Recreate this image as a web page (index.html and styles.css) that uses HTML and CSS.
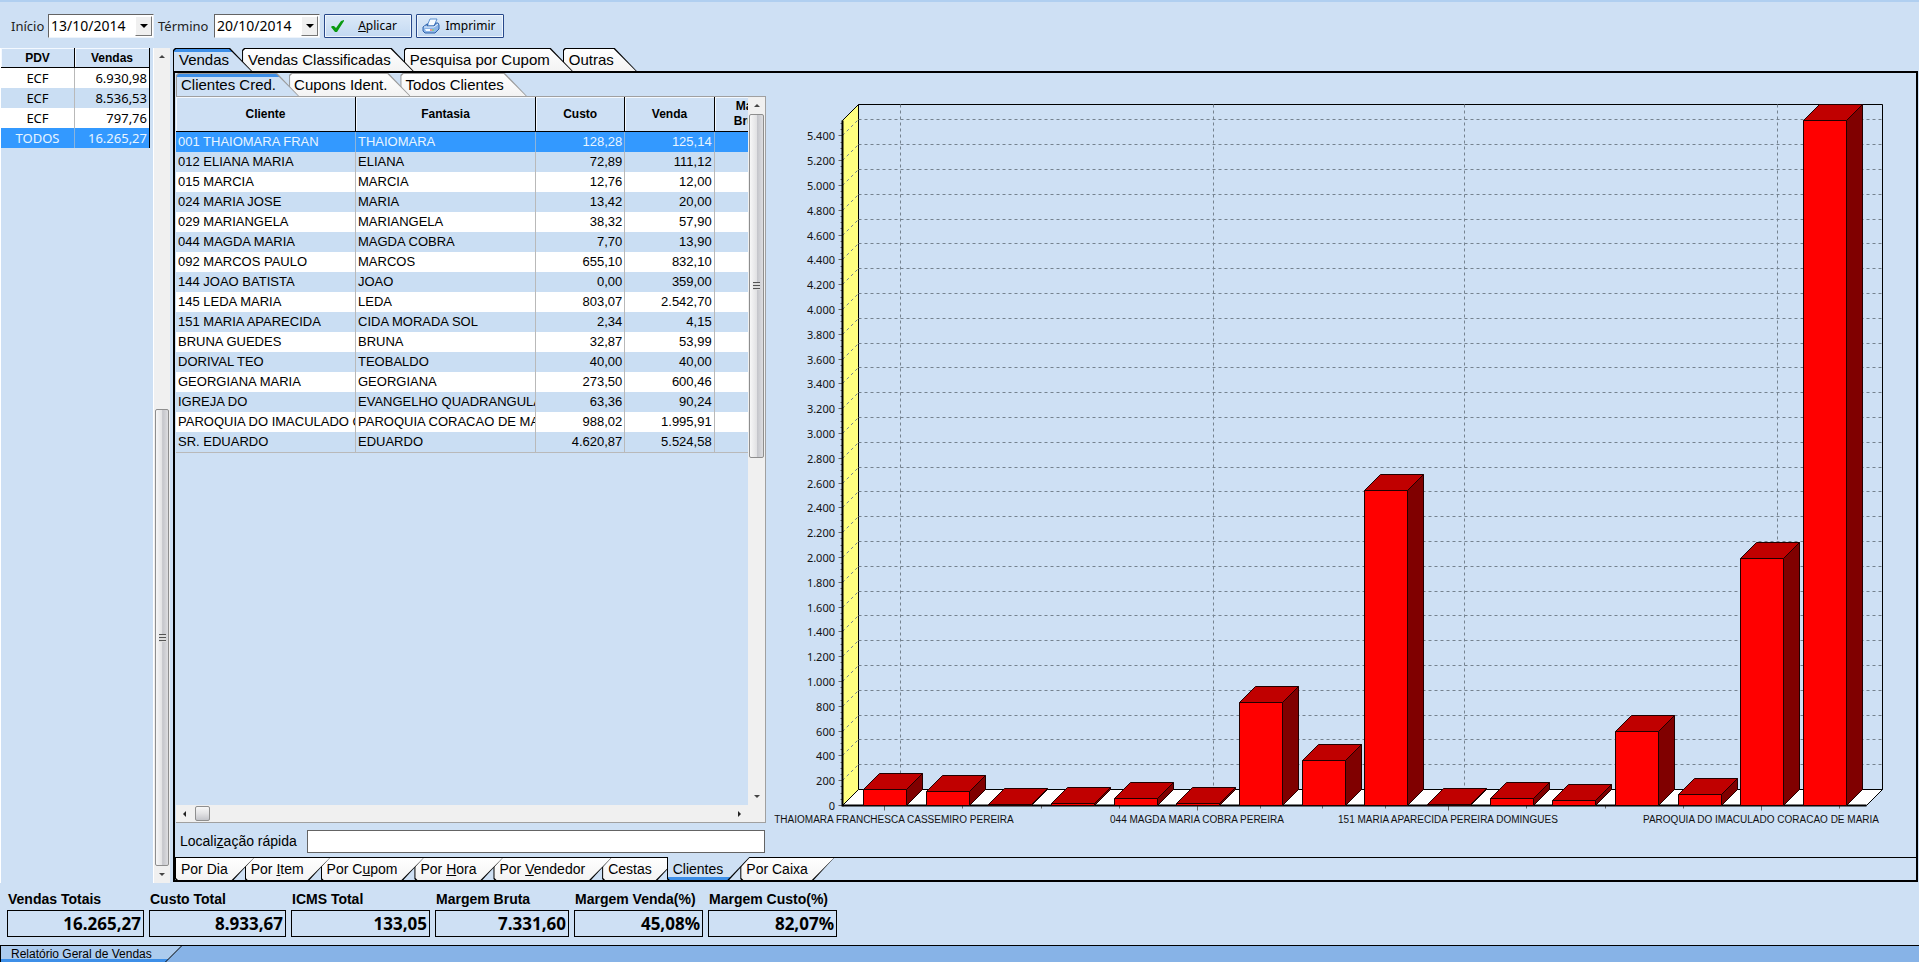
FILE: index.html
```
<!doctype html>
<html lang="pt-BR">
<head>
    <meta charset="UTF-8">
    <title>Relatório Geral de Vendas</title>
    <link rel="stylesheet" href="styles.css">
</head>
<body>

<form class="toolbar">
    <label for="inicio">Início</label>
    <div class="combo">
        <select id="inicio"><option>13/10/2014</option></select>
        <span class="combo-arrow"></span>
    </div>
    <label for="termino">Término</label>
    <div class="combo">
        <select id="termino"><option>20/10/2014</option></select>
        <span class="combo-arrow"></span>
    </div>
    <button type="button" class="btn">
        <svg width="16" height="16" viewBox="0 0 16 16"><path d="M1 9l1-1 2 0 2 2 5-7 3-1 0 1-7 11-2 0z" fill="#0a9a12"/></svg>
        <span><u>A</u>plicar</span>
    </button>
    <button type="button" class="btn">
        <svg width="18" height="16" viewBox="0 0 18 16">
            <path d="M5 8l3-7h7l-3 7z" fill="#f4faff" stroke="#5b8fd0"/>
            <path d="M1 9l4-3h1l-1 2h7l2-3h2l1 2v4l-4 4H3l-2-2z" fill="#8db6e8" stroke="#2f62ab"/>
            <path d="M2 9h10l4-3" fill="none" stroke="#e8f2fd"/>
            <path d="M3 11h9v2H4z" fill="#f7fbff"/>
            <path d="M8 12h2" stroke="#e03030"/>
            <path d="M10 12h2" stroke="#2b9b2b"/>
        </svg>
        <span>Imprimir</span>
    </button>
</form>

<div class="main">
    <div class="pdv">
        <table class="pdv-table">
            <thead>
                <tr><th>PDV</th><th>Vendas</th></tr>
            </thead>
            <tbody>
                <tr><td>ECF</td><td>6.930,98</td></tr>
                <tr><td>ECF</td><td>8.536,53</td></tr>
                <tr><td>ECF</td><td>797,76</td></tr>
                <tr class="selected"><td>TODOS</td><td>16.265,27</td></tr>
            </tbody>
        </table>
    </div>
    <div class="scroll scroll-v scroll-pdv">
        <i class="arrow up"></i>
        <div class="track"><span class="thumb"><i class="grip"></i></span></div>
        <i class="arrow down"></i>
    </div>

    <div class="report">
        <div class="tabs tabs-top">
            <button class="tab active">Vendas</button>
            <button class="tab">Vendas Classificadas</button>
            <button class="tab">Pesquisa por Cupom</button>
            <button class="tab">Outras</button>
        </div>
        <div class="panel">
            <div class="panel-body">
                <div class="list">
                    <div class="tabs tabs-inner">
                        <button class="tab active">Clientes Cred.</button>
                        <button class="tab">Cupons Ident.</button>
                        <button class="tab">Todos Clientes</button>
                    </div>
                    <div class="grid-box">
                        <div class="grid-view">
                            <table class="grid">
                                <colgroup>
                                    <col class="col-name"><col class="col-name">
                                    <col class="col-num"><col class="col-num"><col class="col-num">
                                </colgroup>
                                <thead>
                                    <tr><th>Cliente</th><th>Fantasia</th><th>Custo</th><th>Venda</th><th>Margem<br>Bruta(%)</th></tr>
                                </thead>
                                <tbody>
                                    <tr class="selected"><td>001 THAIOMARA FRAN</td><td>THAIOMARA</td><td>128,28</td><td>125,14</td><td></td></tr>
                                    <tr><td>012 ELIANA MARIA</td><td>ELIANA</td><td>72,89</td><td>111,12</td><td></td></tr>
                                    <tr><td>015 MARCIA</td><td>MARCIA</td><td>12,76</td><td>12,00</td><td></td></tr>
                                    <tr><td>024 MARIA JOSE</td><td>MARIA</td><td>13,42</td><td>20,00</td><td></td></tr>
                                    <tr><td>029 MARIANGELA</td><td>MARIANGELA</td><td>38,32</td><td>57,90</td><td></td></tr>
                                    <tr><td>044 MAGDA MARIA</td><td>MAGDA COBRA</td><td>7,70</td><td>13,90</td><td></td></tr>
                                    <tr><td>092 MARCOS PAULO</td><td>MARCOS</td><td>655,10</td><td>832,10</td><td></td></tr>
                                    <tr><td>144 JOAO BATISTA</td><td>JOAO</td><td>0,00</td><td>359,00</td><td></td></tr>
                                    <tr><td>145 LEDA MARIA</td><td>LEDA</td><td>803,07</td><td>2.542,70</td><td></td></tr>
                                    <tr><td>151 MARIA APARECIDA</td><td>CIDA MORADA SOL</td><td>2,34</td><td>4,15</td><td></td></tr>
                                    <tr><td>BRUNA GUEDES</td><td>BRUNA</td><td>32,87</td><td>53,99</td><td></td></tr>
                                    <tr><td>DORIVAL TEO</td><td>TEOBALDO</td><td>40,00</td><td>40,00</td><td></td></tr>
                                    <tr><td>GEORGIANA MARIA</td><td>GEORGIANA</td><td>273,50</td><td>600,46</td><td></td></tr>
                                    <tr><td>IGREJA DO</td><td>EVANGELHO QUADRANGULAR</td><td>63,36</td><td>90,24</td><td></td></tr>
                                    <tr><td>PAROQUIA DO IMACULADO CORACAO</td><td>PAROQUIA CORACAO DE MARIA</td><td>988,02</td><td>1.995,91</td><td></td></tr>
                                    <tr><td>SR. EDUARDO</td><td>EDUARDO</td><td>4.620,87</td><td>5.524,58</td><td></td></tr>
                                </tbody>
                            </table>
                        </div>
                        <div class="scroll scroll-v scroll-grid">
                            <i class="arrow up"></i>
                            <div class="track"><span class="thumb"><i class="grip"></i></span></div>
                            <i class="arrow down"></i>
                        </div>
                        <div class="scroll scroll-h">
                            <i class="arrow left"></i>
                            <div class="track"><span class="thumb"></span></div>
                            <i class="arrow right"></i>
                        </div>
                    </div>
                    <div class="search">
                        <label for="busca">Locali<u>z</u>ação rápida</label>
                        <input type="text" id="busca">
                    </div>
                </div>
                <div class="chart">
                    <svg id="chart" viewBox="767 73 1149 784"></svg>
                </div>
            </div>
            <div class="tabs tabs-bottom">
                <button class="tab">Por Dia</button>
                <button class="tab">Por <u>I</u>tem</button>
                <button class="tab">Por C<u>u</u>pom</button>
                <button class="tab">Por <u>H</u>ora</button>
                <button class="tab">Por <u>V</u>endedor</button>
                <button class="tab">Cestas</button>
                <button class="tab active">Clientes</button>
                <button class="tab">Por Caixa</button>
            </div>
        </div>
    </div>
</div>

<div class="totals">
    <div class="total"><label for="t1">Vendas Totais</label><input id="t1" value="16.265,27" readonly></div>
    <div class="total"><label for="t2">Custo Total</label><input id="t2" value="8.933,67" readonly></div>
    <div class="total"><label for="t3">ICMS Total</label><input id="t3" value="133,05" readonly></div>
    <div class="total"><label for="t4">Margem Bruta</label><input id="t4" value="7.331,60" readonly></div>
    <div class="total"><label for="t5">Margem Venda(%)</label><input id="t5" value="45,08%" readonly></div>
    <div class="total"><label for="t6">Margem Custo(%)</label><input id="t6" value="82,07%" readonly></div>
</div>

<div class="windows">
    <button class="window-tab">Relatório Geral de Vendas</button>
</div>

<script src="chart.js"></script>
</body>
</html>
```
FILE: styles.css
```
* {
    box-sizing: border-box;
    margin: 0;
    padding: 0;
}
body {
    display: flex;
    flex-direction: column;
    height: 100vh;
    overflow: hidden;
    border-top: 2px solid #b0cff0;
    background: #cee0f4;
    color: #000;
    font: 15px "Liberation Sans", Arial, sans-serif;
}
button, input, select {
    font: inherit;
    color: inherit;
}

/* barra superior */
.toolbar {
    display: flex;
    align-items: center;
    gap: 4px;
    height: 46px;
    padding: 1px 11px 0;
    font: 14px "Noto Sans", Tahoma, sans-serif;
}
.toolbar label {
    width: 33px;
    color: #222;
    font-size: 13px;
}
.toolbar label[for=termino] {
    width: 52px;
}
.combo {
    position: relative;
    width: 106px;
    height: 24px;
    border: 1px solid #646464;
    border-right-color: #eef4fb;
    border-bottom-color: #eef4fb;
}
.combo select {
    appearance: none;
    width: 100%;
    height: 100%;
    padding-left: 2px;
    border: 0;
    border-radius: 0;
    background: #fff;
}
.combo-arrow {
    position: absolute;
    top: 1px;
    right: 1px;
    width: 17px;
    height: 20px;
    border: 1px solid #fff;
    border-right-color: #777;
    border-bottom-color: #777;
    background: #f0f0f0;
    pointer-events: none;
}
.combo-arrow:after {
    content: '';
    position: absolute;
    left: 4px;
    top: 7px;
    border: 4px solid transparent;
    border-top-color: #000;
    border-bottom: 0;
}
.btn {
    display: flex;
    align-items: center;
    width: 88px;
    height: 24px;
    padding: 0 6px 0 5px;
    border: 1px solid #27488a;
    border-radius: 1px;
    background: linear-gradient(#dbe9f8, #c3d9f2);
    box-shadow: inset 0 0 0 1px #eef5fc;
    font-size: 12px;
}
.btn span {
    flex: 1;
    padding-left: 4px;
    text-align: center;
}

/* area principal */
.main {
    display: flex;
    flex: 1;
    min-height: 0;
}
.pdv {
    width: 153px;
    border-left: 1px solid #fff;
}
table {
    border-collapse: separate;
    border-spacing: 0;
    table-layout: fixed;
}
.pdv-table {
    width: 149px;
    border-right: 1px solid #000;
    font: 13px "Noto Sans", Tahoma, sans-serif;
}
th {
    border-right: 1px solid #000;
    border-bottom: 1px solid #000;
    background: #cee0f4;
    box-shadow: inset 1px 1px 0 #f4f9ff;
    font: bold 12px "Liberation Sans", Arial, sans-serif;
}
.pdv-table th {
    height: 20px;
}
.pdv-table th:last-child {
    border-right: 0;
}
td {
    height: 20px;
    overflow: hidden;
    border-right: 1px solid #b9b9b9;
    line-height: 20px;
    white-space: nowrap;
}
.pdv-table td {
    text-align: center;
}
.pdv-table td:last-child {
    padding-right: 2px;
    border-right: 0;
    text-align: right;
}
tbody tr:nth-child(odd) {
    background: #fff;
}
tbody tr:nth-child(even) {
    background: #cadef3;
}
tbody tr.selected {
    background: #3399ff;
    color: #e9f5ff;
}
.selected td {
    border-right-color: #8cb4dc;
}

/* barras de rolagem */
.scroll {
    display: flex;
    align-items: center;
    background: #f0f0f0;
}
.scroll-v {
    flex-direction: column;
    width: 17px;
}
.scroll-h {
    grid-column: 1;
    height: 17px;
}
.track {
    display: flex;
    flex: 1;
    align-self: stretch;
    min-height: 0;
}
.scroll-v .track {
    flex-direction: column;
}
.thumb {
    display: flex;
    align-items: center;
    justify-content: center;
    border: 1px solid #8e8e8e;
    border-radius: 2px;
    background: linear-gradient(90deg, #f7f7f7, #e2e2e4 50%, #c4c5ca 55%, #dddde0);
}
.scroll-v .thumb {
    margin: 0 1px;
}
.scroll-pdv {
    border-left: 1px solid #fff;
}
.scroll-pdv .track {
    justify-content: flex-end;
}
.scroll-pdv .thumb {
    height: 57%;
}
.scroll-grid .thumb {
    height: 51%;
}
.scroll-h .thumb {
    width: 15px;
    margin: 1px 0 1px 2px;
    background: linear-gradient(#f7f7f7, #e2e2e4 50%, #c4c5ca);
}
.grip {
    width: 7px;
    height: 8px;
    background: repeating-linear-gradient(#555 0 1px, #ddd 1px 3px);
}
.arrow {
    display: flex;
    align-items: center;
    justify-content: center;
    width: 17px;
    height: 17px;
}
.arrow:after {
    content: '';
    border: 3px solid transparent;
}
.up:after {
    border-bottom-color: #444;
    border-top: 0;
}
.down:after {
    border-top-color: #444;
    border-bottom: 0;
}
.left:after {
    border-right-color: #222;
    border-left: 0;
}
.right:after {
    border-left-color: #222;
    border-right: 0;
}

/* abas */
.report {
    display: flex;
    flex: 1;
    flex-direction: column;
    min-width: 0;
    margin: 0 1px 1px 3px;
}
.tabs {
    position: relative;
    z-index: 0;
    display: flex;
    --line: #000;
    --fill: linear-gradient(#fff, #f3f3f3);
}
.tabs-inner {
    --line: #9a9a9a;
}
.tab {
    position: relative;
    z-index: 1;
    height: 23px;
    margin-right: -10px;
    padding: 0 23px 0 6px;
    border: 0;
    background: var(--line);
    clip-path: polygon(0 2px, 2px 0, calc(100% - 22px) 0, 100% 100%, 0 100%);
    font-size: 15px;
    line-height: 24px;
    white-space: nowrap;
}
.tab:before {
    content: '';
    position: absolute;
    z-index: -1;
    top: 1px;
    right: 0;
    bottom: 0;
    left: 1px;
    background: var(--fill);
    clip-path: polygon(0 2px, 2px 0, calc(100% - 23px) 0, calc(100% - 1px) 100%, 0 100%);
}
.tabs-inner .tab {
    padding: 0 23px 0 5px;
}
.tab:nth-child(1) { z-index: 8; }
.tab:nth-child(2) { z-index: 7; }
.tab:nth-child(3) { z-index: 6; }
.tab:nth-child(4) { z-index: 5; }
.tab:nth-child(5) { z-index: 4; }
.tab:nth-child(6) { z-index: 3; }
.tab.active {
    z-index: 9;
    --fill: linear-gradient(#3d8fe8 3px, #cee0f4 3px);
}
.tabs-bottom {
    height: 25px;
    border-bottom: 2px solid #000;
    background: linear-gradient(#000 1px, transparent 1px);
}
.tabs-bottom .tab {
    height: 24px;
    padding-right: 27px;
    clip-path: polygon(0 0, 100% 0, calc(100% - 22px) 100%, 2px 100%, 0 calc(100% - 2px));
    font-size: 14px;
}
.tabs-bottom .tab:before {
    bottom: 1px;
    clip-path: polygon(0 0, calc(100% - 1px) 0, calc(100% - 23px) 100%, 2px 100%, 0 calc(100% - 2px));
}
.tabs-bottom .tab.active {
    margin-left: -2px;
    --fill: linear-gradient(#cee0f4 20px, #3d8fe8 20px);
}
.tabs-bottom .tab.active:before {
    top: 0;
}

.panel {
    display: flex;
    flex: 1;
    flex-direction: column;
    min-height: 0;
    border: 2px solid #000;
    border-bottom: 0;
}
.panel-body {
    display: flex;
    flex: 1;
    min-height: 0;
}
.list {
    display: flex;
    flex-direction: column;
    width: 592px;
    padding: 0 1px;
}
.grid-box {
    display: grid;
    flex: 1;
    grid-template: minmax(0, 1fr) 17px / minmax(0, 1fr) 17px;
    min-height: 0;
    border: 1px solid #a0a0a0;
    border-left: 0;
    background: #f0f0f0;
}
.grid-view {
    overflow: hidden;
    background: #cee0f4;
}
.grid {
    width: 628px;
    border-bottom: 1px solid #b9b9b9;
    font-size: 13px;
}
.col-name {
    width: 180px;
}
.grid th {
    height: 35px;
    line-height: 15px;
}
.grid td {
    padding: 0 2px;
}
.grid td:nth-child(n+3) {
    text-align: right;
}
.search {
    display: flex;
    align-items: center;
    gap: 5px;
    height: 34px;
    padding: 2px 1px 0 4px;
    font-size: 14px;
}
.search label {
    width: 122px;
    white-space: nowrap;
}
.search input {
    flex: 1;
    height: 23px;
    padding: 0 4px;
    border: 1px solid #646464;
}

/* grafico */
.chart {
    flex: 1;
    min-width: 0;
}
.chart svg {
    display: block;
    width: 100%;
    height: 100%;
}
.wall {
    fill: #ffff80;
    stroke: #000;
}
.floor {
    fill: #fff;
    stroke: #000;
}
.back {
    fill: none;
    stroke: #000;
}
.axis {
    stroke: #000;
    stroke-width: 2;
}
.guide {
    stroke: #75828f;
    stroke-dasharray: 3 3;
}
.tick {
    stroke: #666;
}
.front {
    fill: #f00;
    stroke: #200;
}
.top {
    fill: #c00000;
    stroke: #200;
}
.side {
    fill: #800000;
    stroke: #200;
}
.chart text {
    fill: #111;
    font: 10px "Liberation Sans", Arial, sans-serif;
    text-anchor: middle;
}
.chart .value {
    font: 11px "Noto Sans", Tahoma, sans-serif;
    text-anchor: end;
}

/* totais */
.totals {
    display: flex;
    gap: 5px;
    height: 62px;
    padding: 6px 7px 0;
}
.total {
    width: 137px;
}
.total:nth-child(3) { width: 139px; }
.total:nth-child(4) { width: 134px; }
.total:nth-child(n+5) { width: 129px; }
.total label {
    display: block;
    height: 21px;
    padding-left: 1px;
    font-size: 14px;
    font-weight: bold;
    line-height: 20px;
    white-space: nowrap;
}
.total input {
    display: block;
    width: 100%;
    height: 27px;
    padding: 0 2px 1px;
    border: 1px solid #000;
    background: none;
    font: bold 17px "Noto Sans", Tahoma, sans-serif;
    text-align: right;
}

.windows {
    height: 17px;
    border-top: 1px solid #000;
    background: #87b3e7;
}
.window-tab {
    position: relative;
    z-index: 0;
    display: block;
    width: 182px;
    height: 16px;
    padding-left: 11px;
    border: 0;
    background: #000;
    clip-path: polygon(0 0, 100% 0, calc(100% - 16px) 100%, 0 100%);
    font-size: 12px;
    line-height: 16px;
    text-align: left;
}
.window-tab:before {
    content: '';
    position: absolute;
    z-index: -1;
    top: 0;
    right: 0;
    bottom: 0;
    left: 1px;
    background: linear-gradient(#accbee 13px, #3d8fe8 13px);
    clip-path: polygon(0 0, calc(100% - 1px) 0, calc(100% - 17px) 100%, 0 100%);
}
```
FILE: chart.js
```
var svg = document.getElementById('chart');
var vendas = [125.14, 111.12, 12, 20, 57.9, 13.9, 832.1, 359, 2542.7, 4.15, 53.99, 40, 600.46, 90.24, 1995.91, 5524.58];

var left = 842.5, right = 1866.5, base = 805.5, top0 = 120.5;
var depth = 16;
var step = 62.67, barWidth = 43;

function add(name, attrs, text) {
    var el = document.createElementNS('http://www.w3.org/2000/svg', name);
    for (var key in attrs) {
        el.setAttribute(key, attrs[key]);
    }
    if (text) {
        el.textContent = text;
    }
    svg.appendChild(el);
}
function line(cls, x1, y1, x2, y2) {
    add('line', {'class': cls, x1: x1, y1: y1, x2: x2, y2: y2});
}
function poly(cls, points) {
    add('polygon', {'class': cls, points: points.join(' ')});
}
function yOf(value) {
    return Math.floor(base - value * 0.124) + 0.5;
}

// paredes e piso
poly('back', [left + depth, top0 - depth, right + depth, top0 - depth, right + depth, base - depth, left + depth, base - depth]);
poly('wall', [left, top0, left + depth, top0 - depth, left + depth, base - depth, left, base]);
poly('floor', [left, base, left + depth, base - depth, right + depth, base - depth, right, base]);

// escala
for (var v = 0; v <= 5500; v += 50) {
    var y = yOf(v);
    if (v % 200) {
        line('tick', left - 2, y, left, y);
        continue;
    }
    line('tick', left - 4, y, left, y);
    add('text', {'class': 'value', x: 835, y: y + 4}, v.toLocaleString('de-DE'));
    if (v) {
        line('guide', left, y, left + depth, y - depth);
        line('guide', left + depth, y - depth, right + depth, y - depth);
    }
}

// nomes
var nomes = [
    [884.5, 894, 'THAIOMARA FRANCHESCA CASSEMIRO PEREIRA'],
    [1197.5, 1197, '044 MAGDA MARIA COBRA PEREIRA'],
    [1448.5, 1448, '151 MARIA APARECIDA PEREIRA DOMINGUES'],
    [1761.5, 1761, 'PAROQUIA DO IMACULADO CORACAO DE MARIA']
];
nomes.forEach(function (n) {
    line('guide', n[0] + depth, top0 - depth, n[0] + depth, base - depth);
    line('tick', n[0], base, n[0], base + 5);
    add('text', {x: n[1], y: 823}, n[2]);
});
[962.5, 1041.5, 1119.5, 1260.5, 1322.5, 1385.5, 1526.5, 1605.5, 1683.5, 1839.5].forEach(function (x) {
    line('tick', x, base, x, base + 3);
});

line('axis', left, top0, left, base + 1);
line('axis', left, base, right, base);

// barras
vendas.forEach(function (valor, i) {
    var x = Math.round(863 + i * step) + 0.5;
    var x2 = x + barWidth;
    var y = yOf(valor);
    poly('side', [x2, y, x2 + depth, y - depth, x2 + depth, base - depth, x2, base]);
    poly('top', [x, y, x + depth, y - depth, x2 + depth, y - depth, x2, y]);
    poly('front', [x, y, x2, y, x2, base, x, base]);
});
```
